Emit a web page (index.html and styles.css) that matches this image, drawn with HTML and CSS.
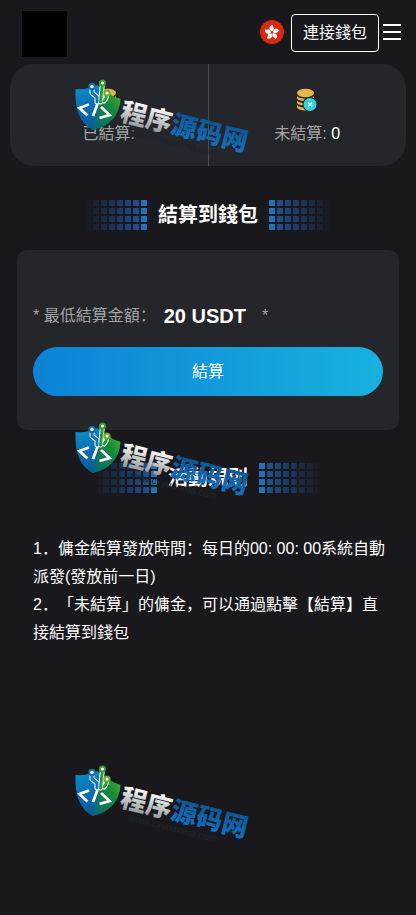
FILE: index.html
```html
<!DOCTYPE html>
<html lang="zh-CN">
<head>
    <title>結算到錢包</title>
    <meta charset="utf-8" />
    <meta name="viewport" content="width=device-width, initial-scale=1" />
    <link rel="stylesheet" href="styles.css">
</head>
<body>
    <header class="topbar">
        <a class="logo" href="#" aria-label="首頁"></a>
        <button class="lang" type="button" aria-label="語言">
            <svg viewBox="0 0 24 24" width="24" height="24" aria-hidden="true">
                <circle cx="12" cy="12" r="12" fill="#d82910" />
                <g fill="#ffffff" transform="translate(12 12.500)">
                    <path id="petal" d="M0-1C-4-3-3-7 1-7.500 0-6 4-4 0-1z" />
                    <use href="#petal" transform="rotate(72)" />
                    <use href="#petal" transform="rotate(144)" />
                    <use href="#petal" transform="rotate(216)" />
                    <use href="#petal" transform="rotate(288)" />
                </g>
            </svg>
        </button>
        <button class="connect" type="button">連接錢包</button>
        <button class="menu" type="button" aria-label="選單">
            <span></span>
            <span></span>
            <span></span>
        </button>
    </header>

    <main>
        <section class="stats">
            <div class="stat">
                <svg class="coins" viewBox="0 0 22 24" aria-hidden="true">
                    <g id="coins">
                        <g fill="#e9b54b">
                            <ellipse cx="9.500" cy="5" rx="8.500" ry="4.200" />
                            <path d="M1 8c2 3.500 15 3.500 17 0v2.500c-2 3.500-15 3.500-17 0z" />
                            <path d="M1 12.500c2 3.500 15 3.500 17 0v2.500c-2 3.500-15 3.500-17 0z" />
                            <path d="M1 17c2 3.500 15 3.500 17 0v2.500c-2 4-15 4-17 0z" />
                        </g>
                        <circle cx="14" cy="16.500" r="7.500" fill="#24262b" />
                        <circle cx="14" cy="16.500" r="6.500" fill="#30d4e0" />
                        <path d="M12 14.500l4 4M16 14.500l-4 4" stroke="#e5ffff" stroke-width="1.200" />
                    </g>
                </svg>
                <p>已結算: <strong></strong></p>
            </div>
            <div class="stat">
                <svg class="coins" viewBox="0 0 22 24" aria-hidden="true"><use href="#coins" /></svg>
                <p>未結算: <strong>0</strong></p>
            </div>
        </section>

        <h2 class="title">結算到錢包</h2>

        <section class="card">
            <p class="minimum">
                <span>* 最低結算金額：</span>
                <strong>20 USDT</strong>
                <span>*</span>
            </p>
            <button class="settle" type="button">結算</button>
        </section>

        <h2 class="title">活動規則</h2>

        <section class="rules">
            <p>1．傭金結算發放時間：每日的00: 00: 00系統自動派發(發放前一日)</p>
            <p>2．「未結算」的傭金，可以通過點擊【結算】直接結算到錢包</p>
        </section>
    </main>

    <!-- Watermark over the page -->
    <div class="watermark" aria-hidden="true">
        <svg viewBox="0 0 190 90">
            <defs>
                <linearGradient id="shield-base" x1="0" y1="0" x2="0.3" y2="1">
                    <stop offset="0" stop-color="#0a92cc" />
                    <stop offset="0.6" stop-color="#0a68ae" />
                    <stop offset="1" stop-color="#0b5c96" />
                </linearGradient>
                <linearGradient id="shield-right" x1="1" y1="0" x2="0" y2="1">
                    <stop offset="0" stop-color="#5cb92a" />
                    <stop offset="0.4" stop-color="#16883a" />
                    <stop offset="1" stop-color="#07667a" />
                </linearGradient>
                <linearGradient id="silver" x1="0" y1="0" x2="0" y2="1">
                    <stop offset="0.2" stop-color="#ffffff" />
                    <stop offset="1" stop-color="#85888c" />
                </linearGradient>
                <linearGradient id="blue" x1="0" y1="0" x2="0" y2="1">
                    <stop offset="0.2" stop-color="#0b5796" />
                    <stop offset="1" stop-color="#1675c8" />
                </linearGradient>
            </defs>
            <g id="mark">
                <path d="M1.500 9q12 1 22-4 10 10 23 14-2 25-28 31Q0 40 1.500 9z" fill="url(#shield-base)" />
                <path d="M26 6q9 10 20.500 13-2 25-28 31 6-20 7.500-44z" fill="url(#shield-right)" />
                <g fill="none" stroke-linecap="round" stroke-linejoin="round">
                    <path d="M18 7v6l5 4v5M28.500 3l-2 19M33 13l-1 5-2 3" stroke="#ffffff" stroke-width="5" />
                    <path d="M18 7v6l5 4v5" stroke="#1770ba" stroke-width="3" />
                    <path d="M28.500 3l-2 19M33 13l-1 5-2 3" stroke="#279c3a" stroke-width="3" />
                    <circle cx="18" cy="6.500" r="2.800" fill="#ffffff" stroke="#126bb5" stroke-width="2" />
                    <circle cx="28.500" cy="3" r="2.600" fill="#ffffff" stroke="#2f9d32" stroke-width="2" />
                    <circle cx="33" cy="13" r="2.600" fill="#ffffff" stroke="#63ad2c" stroke-width="2" />
                </g>
                <path d="M15 24.500L5.500 28 13.500 35.500M23.500 24l-4.500 12M27 27l8.500 8L25.500 38" fill="none" stroke="#ffffff" stroke-width="2.800" />
                <g transform="translate(45 40) rotate(14)">
                    <text class="mark-name" fill="url(#silver)">程序<tspan fill="url(#blue)">源码网</tspan></text>
                    <text class="mark-url" x="12" y="12">www.cxyuanma.com</text>
                </g>
            </g>
        </svg>
        <svg viewBox="0 0 190 90"><use href="#mark" /></svg>
        <svg viewBox="0 0 190 90"><use href="#mark" /></svg>
    </div>
</body>
</html>
```
FILE: styles.css
```css
*, *:before, *:after { box-sizing: border-box; }
html, body, h2, p { margin: 0; padding: 0; }

body {
    position: relative;
    min-height: 100vh;
    background-color: #19181d;
    color: #ffffff;
    font-family: "Liberation Sans", "Noto Sans CJK SC", sans-serif;
    font-size: 16px;
    line-height: 28px;
    text-spacing-trim: space-all;
}

button {
    padding: 0;
    border: 0;
    background: none;
    color: inherit;
    font: inherit;
    cursor: pointer;
}

/* Header */
.topbar {
    display: flex;
    align-items: center;
    height: 64px;
    padding: 0 15px 0 22px;
}

.logo {
    width: 45px;
    height: 46px;
    margin: 4px auto 0 0;
    background-color: #000000;
}

.lang {
    height: 24px;
    margin-right: 7px;
}

.lang svg { display: block; }

.connect {
    height: 38px;
    margin: 2px 4px 0 0;
    padding: 0 11px;
    border: 1px solid #ffffff;
    border-radius: 4px;
}

.menu {
    display: flex;
    flex-direction: column;
    gap: 5px;
    width: 18px;
}

.menu span {
    height: 2px;
    background-color: #ffffff;
}

/* Settled / unsettled totals */
.stats {
    display: flex;
    margin: 0 10px;
    border-radius: 24px;
    background-color: #24262b;
}

.stat {
    flex: 1;
    height: 102px;
    padding-top: 24px;
    color: #a3a3a5;
    text-align: center;
}

.stat:first-child { border-right: 1px solid #4d4e52; }

.stat strong {
    color: #ffffff;
    font-weight: 400;
}

.coins {
    display: block;
    width: 22px;
    height: 24px;
    margin: 0 auto 8px;
}

/* Section titles with fading squares on each side */
.title {
    display: flex;
    align-items: center;
    justify-content: center;
    gap: 11px;
    height: 30px;
    margin-top: 34px;
    font-size: 20px;
    font-weight: 700;
}

.title:before,
.title:after {
    content: '';
    width: 62px;
    height: 30px;
    background-image:
        linear-gradient(90deg, transparent 6px, #19181d 6px),
        linear-gradient(transparent 6px, #19181d 6px),
        linear-gradient(270deg, #2270b8 0, #2270b8 6px, #21508b 8px, #1c365c 32px, #19181d 62px);
    background-size: 8px 8px, 8px 8px, auto;
}

.title:after {
    background-image:
        linear-gradient(90deg, transparent 6px, #19181d 6px),
        linear-gradient(transparent 6px, #19181d 6px),
        linear-gradient(90deg, #2270b8 0, #2270b8 6px, #21508b 8px, #1c365c 32px, #19181d 62px);
}

/* Settlement card */
.card {
    margin: 20px 17px 0;
    padding: 52px 16px 34px;
    border-radius: 10px;
    background-color: #24262b;
}

.minimum {
    display: flex;
    align-items: center;
    height: 28px;
    margin-bottom: 17px;
    color: #a3a3a5;
}

.minimum strong {
    margin: 0 16px 0 8px;
    color: #ffffff;
    font-size: 20px;
}

.settle {
    width: 100%;
    height: 49px;
    border-radius: 25px;
    background-image: linear-gradient(90deg, #0d82d6, #18b1df);
}

/* Rules */
.rules { padding: 42px 28px 40px 33px; }

.card + .title { margin-top: 33px; }

/* Watermark */
.watermark {
    position: absolute;
    top: 80px;
    left: 74px;
    pointer-events: none;
}

.watermark svg {
    display: block;
    width: 190px;
    height: 90px;
    margin-bottom: 253px;
    overflow: visible;
}

.watermark svg:last-child { margin-bottom: 0; }

.mark-name {
    font-family: "Noto Sans CJK SC", sans-serif;
    font-size: 26px;
    font-weight: 900;
}

.mark-url {
    fill: #1c242c;
    font-size: 10px;
}
```
